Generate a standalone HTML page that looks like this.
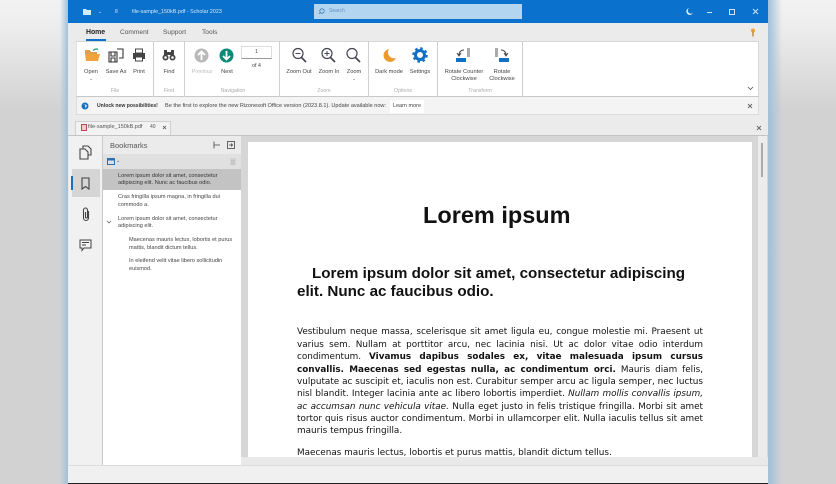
<!DOCTYPE html>
<html><head><meta charset="utf-8"><style>
html,body{margin:0;padding:0}
body{width:836px;height:484px;position:relative;overflow:hidden;background:linear-gradient(#f2f2f2 0,#ececec 30px,#d2d2d2 110px,#d2d2d2 100%);font-family:"Liberation Sans",sans-serif}
#w{position:absolute;left:0;top:0;width:836px;height:484px;filter:blur(.3px)}
div,svg{position:absolute}
.t{white-space:nowrap;color:#444;font-size:5.7px;line-height:7px;text-align:center}
.g{white-space:nowrap;color:#aaa;font-size:5.2px;line-height:7px;text-align:center}
.sep{width:1px;background:#cfcfcf;top:42px;height:55px}
.l{position:absolute;left:297px;width:406px;font-family:"DejaVu Sans",sans-serif;font-size:8.84px;line-height:12px;height:12px;color:#111;text-align:justify;text-align-last:justify}
.b{white-space:nowrap;font-size:5.6px;line-height:7.5px;color:#444}
</style></head><body><div id="w">
<div style="left:60px;top:0;width:8px;height:484px;background:linear-gradient(90deg,rgba(160,195,225,0),#9fc0da)"></div>
<div style="left:768px;top:0;width:14px;height:484px;background:linear-gradient(90deg,#9fc0da,rgba(160,195,225,0))"></div>
<div style="left:68px;top:0;width:700px;height:484px;background:#ebebeb"></div>
<div style="left:68px;top:483px;width:700px;height:1px;background:#222"></div>
<!-- title bar -->
<div style="left:68px;top:0;width:700px;height:23px;background:#0a72cc"></div>
<svg style="left:82px;top:7px" width="10" height="9" viewBox="0 0 10 9"><path d="M1 2h3l1 1h4v5H1z" fill="#d8eafa"/></svg>
<div class="t" style="left:98px;top:9px;color:#cfe3f5;font-size:5px">⌄</div>
<div class="t" style="left:115px;top:9px;color:#cfe3f5;font-size:5px">8</div>
<div class="t" style="left:132px;top:9px;color:#d5e7f7;font-size:5.4px">file-sample_150kB.pdf - Scholar 2023</div>
<div style="left:314px;top:4px;width:208px;height:15px;background:#b3d5f0"></div>
<svg style="left:318px;top:8px" width="7" height="7" viewBox="0 0 7 7"><circle cx="4" cy="3" r="2.2" fill="none" stroke="#3b78b0" stroke-width=".8"/><path d="M2.4 4.6L1 6" stroke="#3b78b0" stroke-width=".8"/></svg>
<div class="t" style="left:329px;top:8px;color:#5d93c4;font-size:5px">Search</div>
<svg style="left:685px;top:7px" width="9" height="9" viewBox="0 0 9 9"><path d="M4 1a3.5 3.5 0 1 0 4 5 3 3 0 0 1-4-5z" fill="#e4f0fa"/></svg>
<div style="left:707px;top:12px;width:5px;height:1px;background:#cfe3f5"></div>
<div style="left:729px;top:9px;width:4px;height:4px;border:1px solid #cfe3f5"></div>
<svg style="left:752px;top:8px" width="7" height="7" viewBox="0 0 7 7"><path d="M1 1l5 5M6 1l-5 5" stroke="#d5e7f7" stroke-width=".9"/></svg>
<!-- tabs -->
<div style="left:86px;top:29px;color:#222;font-size:6.9px;font-weight:bold;line-height:8px">Home</div>
<div style="left:86px;top:39px;width:20px;height:1.5px;background:#0a72cc"></div>
<div style="left:120px;top:29px;color:#555;font-size:6.6px;line-height:8px">Comment</div>
<div style="left:163px;top:29px;color:#555;font-size:6.6px;line-height:8px">Support</div>
<div style="left:202px;top:29px;color:#555;font-size:6.6px;line-height:8px">Tools</div>
<svg style="left:749px;top:28px" width="8" height="9" viewBox="0 0 8 9"><circle cx="4" cy="2.500" r="2" fill="#e8a33a"/><rect x="3.300" y="3.500" width="1.400" height="5" fill="#b8873a"/></svg>
<!-- ribbon -->
<div style="left:76px;top:41px;width:683px;height:56px;background:#fff;border-top:1px solid #d5d5d5;border-bottom:1px solid #c8c8c8;border-right:1px solid #d8d8d8;border-left:1px solid #e0e0e0;box-sizing:border-box"></div>
<div class="sep" style="left:153px"></div><div class="sep" style="left:184px"></div><div class="sep" style="left:279px"></div><div class="sep" style="left:368px"></div><div class="sep" style="left:437px"></div><div class="sep" style="left:522px"></div>
<!-- Open -->
<svg style="left:84px;top:47px" width="17" height="15" viewBox="0 0 17 15"><path d="M1 3h5l1 2h6v2H1z" fill="#d9a050"/><path d="M1 7h15l-2 7H2z" fill="#f3a33c"/><path d="M9 3.500a4 4 0 0 1 5-1" stroke="#159a80" fill="none" stroke-width="1.300"/></svg>
<svg style="left:108px;top:48px" width="16" height="15" viewBox="0 0 16 15" fill="none" stroke="#333" stroke-width="1.100"><path d="M1 4h8v10H1z"/><path d="M3 4v4h4V4M3 14v-4h4v4"/><path d="M9 1h6v9h-4"/></svg>
<svg style="left:132px;top:48px" width="14" height="14" viewBox="0 0 14 14"><path d="M3.500 1h7v4h-7z" fill="none" stroke="#444"/><path d="M1 5h12v6H1z" fill="#444"/><path d="M3.500 9h7v4h-7z" fill="#fff" stroke="#444"/></svg>
<div class="t" style="left:76px;top:69px;width:30px">Open</div><div class="t" style="left:76px;top:75px;width:30px;font-size:4px">⌄</div>
<div class="t" style="left:104px;top:69px;width:24px">Save As</div>
<div class="t" style="left:127px;top:69px;width:24px">Print</div>
<div class="g" style="left:100px;top:88px;width:30px">File</div>
<!-- Find -->
<svg style="left:162px;top:48px" width="14" height="14" viewBox="0 0 14 14"><circle cx="3.500" cy="9.500" r="3" fill="#444"/><circle cx="10.500" cy="9.500" r="3" fill="#444"/><path d="M2 2h3v6H2zM9 2h3v6H9zM5 4h4v3H5z" fill="#444"/><circle cx="3.500" cy="9.500" r="1.300" fill="#fff"/><circle cx="10.500" cy="9.500" r="1.300" fill="#fff"/></svg>
<div class="t" style="left:157px;top:69px;width:24px">Find</div>
<div class="g" style="left:157px;top:88px;width:24px">Find</div>
<!-- Nav -->
<svg style="left:194px;top:48px" width="15" height="15" viewBox="0 0 15 15"><circle cx="7.500" cy="7.500" r="7" fill="#b9b9b9"/><path d="M7.500 12V4M4 7l3.500-3.500L11 7" stroke="#fff" stroke-width="1.800" fill="none"/></svg>
<svg style="left:219px;top:48px" width="15" height="15" viewBox="0 0 15 15"><circle cx="7.500" cy="7.500" r="7" fill="#0d8a78"/><path d="M7.500 3v8M4 8l3.500 3.500L11 8" stroke="#fff" stroke-width="1.800" fill="none"/></svg>
<div class="t" style="left:189px;top:69px;width:26px;color:#bbb;font-size:5.3px">Previous</div>
<div class="t" style="left:214px;top:69px;width:26px">Next</div>
<div style="left:241px;top:46px;width:31px;height:13px;background:#fff;border:1px solid #ddd;border-bottom-color:#999;box-sizing:border-box"></div>
<div class="t" style="left:241px;top:49px;width:31px;font-size:5px">1</div>
<div class="t" style="left:241px;top:63px;width:31px;font-size:5.300px">of 4</div>
<div class="g" style="left:200px;top:88px;width:66px">Navigation</div>
<!-- Zoom -->
<svg style="left:291px;top:47px" width="17" height="16" viewBox="0 0 17 16" fill="none" stroke="#445" stroke-width="1.200"><circle cx="7" cy="6.500" r="5"/><path d="M10.500 10.500L15 15" stroke-width="1.700"/><path d="M4.500 6.500h5" stroke-width="1"/></svg>
<svg style="left:320px;top:47px" width="17" height="16" viewBox="0 0 17 16" fill="none" stroke="#445" stroke-width="1.200"><circle cx="7" cy="6.500" r="5"/><path d="M10.500 10.500L15 15" stroke-width="1.700"/><path d="M4.500 6.500h5M7 4v5" stroke-width="1"/></svg>
<svg style="left:345px;top:47px" width="17" height="16" viewBox="0 0 17 16" fill="none" stroke="#445" stroke-width="1.200"><circle cx="7" cy="6.500" r="5"/><path d="M10.500 10.500L15 15" stroke-width="1.700"/></svg>
<div class="t" style="left:284px;top:69px;width:30px">Zoom Out</div>
<div class="t" style="left:314px;top:69px;width:30px">Zoom In</div>
<div class="t" style="left:339px;top:69px;width:30px">Zoom</div><div class="t" style="left:339px;top:75px;width:30px;font-size:4px">⌄</div>
<div class="g" style="left:309px;top:88px;width:30px">Zoom</div>
<!-- Options -->
<svg style="left:382px;top:48px" width="15" height="15" viewBox="0 0 15 15"><path d="M7 1a6.500 6.500 0 1 0 7 9 6 6 0 0 1-7-9z" fill="#ee9a2e"/></svg>
<svg style="left:412px;top:47px" width="16" height="16" viewBox="0 0 16 16"><circle cx="8" cy="8" r="4.500" fill="none" stroke="#1170c4" stroke-width="3"/><circle cx="8" cy="8" r="6.500" fill="none" stroke="#1170c4" stroke-width="2.500" stroke-dasharray="2.500 2.600"/></svg>
<div class="t" style="left:374px;top:69px;width:30px">Dark mode</div>
<div class="t" style="left:405px;top:69px;width:30px">Settings</div>
<div class="g" style="left:388px;top:88px;width:30px">Options</div>
<!-- Transform -->
<svg style="left:455px;top:47px" width="17" height="16" viewBox="0 0 17 16"><rect x="12" y="1" width="3" height="9" fill="#aaa"/><rect x="1" y="11" width="10" height="4" fill="#1170c4"/><path d="M9 3C6 3 4 5 4 8M2 6l2 3 2-3" fill="none" stroke="#444" stroke-width="1"/></svg>
<svg style="left:493px;top:47px" width="17" height="16" viewBox="0 0 17 16"><rect x="2" y="1" width="3" height="9" fill="#aaa"/><rect x="6" y="11" width="10" height="4" fill="#1170c4"/><path d="M8 3c3 0 5 2 5 5M11 6l2 3 2-3" fill="none" stroke="#444" stroke-width="1"/></svg>
<div class="t" style="left:440px;top:69px;width:48px">Rotate Counter</div><div class="t" style="left:440px;top:75.500px;width:48px">Clockwise</div>
<div class="t" style="left:482px;top:69px;width:40px">Rotate</div><div class="t" style="left:482px;top:75.500px;width:40px">Clockwise</div>
<div class="g" style="left:465px;top:88px;width:30px">Transform</div>
<svg style="left:747px;top:86px" width="7" height="5" viewBox="0 0 7 5"><path d="M1 1l2.500 2.500L6 1" fill="none" stroke="#555" stroke-width=".8"/></svg>
<!-- notice -->
<div style="left:76px;top:97px;width:683px;height:18px;background:#f4f4f4;border:1px solid #dcdcdc;border-top:none;box-sizing:border-box"></div>
<svg style="left:81px;top:102px" width="8" height="8" viewBox="0 0 8 8"><circle cx="4" cy="4" r="3.500" fill="#1272c4"/><path d="M2 2l2 1v2l1 1 1-3" fill="#cfe6f7"/></svg>
<div class="t" style="left:97px;top:103px;font-weight:bold;color:#333;font-size:5.1px">Unlock new possibilities!</div>
<div class="t" style="left:165px;top:103px;font-size:5.55px;color:#444">Be the first to explore the new Rizonesoft Office version (2023.8.1). Update available now:</div>
<div style="left:390px;top:100px;width:34px;height:13px;background:#fff"></div>
<div class="t" style="left:390px;top:103px;width:34px;font-size:5.5px">Learn more</div>
<svg style="left:747px;top:103px" width="6" height="6" viewBox="0 0 6 6"><path d="M1 1l4 4M5 1L1 5" stroke="#666" stroke-width=".9"/></svg>
<!-- doc tab -->
<div style="left:75px;top:121px;width:96px;height:15px;background:#f2f2f2;border:1px solid #d0d0d0;border-bottom:none;box-sizing:border-box"></div>
<svg style="left:81px;top:124px" width="6" height="7" viewBox="0 0 6 7"><rect x=".5" y=".5" width="5" height="6" fill="#f2c9c9" stroke="#b84a55"/></svg>
<div class="t" style="left:88px;top:124px;font-size:5.500px;color:#555">file-sample_150kB.pdf</div>
<div class="t" style="left:150px;top:124px;font-size:5px;color:#555">40</div>
<svg style="left:162px;top:125px" width="5" height="5" viewBox="0 0 5 5"><path d="M1 1l3 3M4 1L1 4" stroke="#555" stroke-width=".8"/></svg>
<svg style="left:756px;top:125px" width="6" height="6" viewBox="0 0 6 6"><path d="M1 1l4 4M5 1L1 5" stroke="#666" stroke-width=".9"/></svg>
<div style="left:68px;top:135px;width:700px;height:1px;background:#c4c4c4"></div>
<!-- left rail -->
<div style="left:69px;top:136px;width:33px;height:329px;background:#f1f1f1"></div>
<div style="left:102px;top:136px;width:1px;height:329px;background:#c9c9c9"></div>
<div style="left:72px;top:169px;width:28px;height:28px;background:#d5d5d5"></div>
<div style="left:71px;top:176px;width:1.500px;height:14px;background:#1272c4"></div>
<svg style="left:79px;top:145px" width="13" height="15" viewBox="0 0 13 15" fill="none" stroke="#444" stroke-width="1.100"><path d="M4 4V1h5l3 3v6H9"/><path d="M1 4h5l3 3v7H1z"/></svg>
<svg style="left:81px;top:177px" width="9" height="13" viewBox="0 0 9 13" fill="none" stroke="#444" stroke-width="1.100"><path d="M1 1h7v11L4.500 9.500 1 12z"/></svg>
<svg style="left:81px;top:207px" width="10" height="15" viewBox="0 0 10 15" fill="none" stroke="#444" stroke-width="1.100"><path d="M7.500 4v7a2.500 2.500 0 0 1-5 0V3a2 2 0 0 1 4 0v7a.8.8 0 0 1-2 0V5"/></svg>
<svg style="left:79px;top:239px" width="13" height="13" viewBox="0 0 13 13" fill="none" stroke="#444" stroke-width="1"><path d="M1 1h11v8H5l-2 2.500V9H1z"/><path d="M3 3.500h7M3 6h4"/></svg>
<!-- bookmarks panel -->
<div style="left:103px;top:136px;width:138px;height:329px;background:#fff"></div>
<div style="left:103px;top:136px;width:138px;height:18px;background:#ebebeb"></div>
<div style="left:110px;top:141px;font-size:7.500px;line-height:9px;color:#555">Bookmarks</div>
<svg style="left:213px;top:141px" width="8" height="8" viewBox="0 0 8 8" fill="none" stroke="#444" stroke-width=".8"><path d="M1 .5v7M1 4h6"/></svg>
<svg style="left:227px;top:141px" width="8" height="8" viewBox="0 0 8 8" fill="none" stroke="#444" stroke-width=".8"><rect x=".5" y=".5" width="7" height="7"/><path d="M2 4h4M4 2.500L5.500 4 4 5.500"/></svg>
<div style="left:103px;top:154px;width:138px;height:15px;background:#e0e0e0"></div>
<svg style="left:107px;top:158px" width="8" height="7" viewBox="0 0 8 7"><rect width="8" height="7" fill="#2f6fae"/><rect x="1" y="2.500" width="6" height="3.500" fill="#d5e3f0"/></svg>
<div class="t" style="left:116px;top:158px;font-size:5px;color:#555">⌄</div>
<svg style="left:230px;top:158px" width="6" height="7" viewBox="0 0 6 7"><path d="M0 1h6M1 2h4v5H1z" fill="#c9c9c9" stroke="#bbb" stroke-width=".5"/></svg>
<div style="left:103px;top:169px;width:138px;height:21px;background:#c3c3c3"></div>
<div class="b" style="left:118px;top:172.500px;color:#333">Lorem ipsum dolor sit amet, consectetur<br>adipiscing elit. Nunc ac faucibus odio.</div>
<div class="b" style="left:118px;top:194px">Cras fringilla ipsum magna, in fringilla dui<br>commodo a.</div>
<svg style="left:106px;top:220px" width="6" height="4" viewBox="0 0 6 4"><path d="M1 1l2 2 2-2" fill="none" stroke="#555" stroke-width=".7"/></svg>
<div class="b" style="left:118px;top:215.500px">Lorem ipsum dolor sit amet, consectetur<br>adipiscing elit.</div>
<div class="b" style="left:129px;top:237px">Maecenas mauris lectus, lobortis et purus<br>mattis, blandit dictum tellus.</div>
<div class="b" style="left:129px;top:258px">In eleifend velit vitae libero sollicitudin<br>euismod.</div>
<!-- viewer -->
<div style="left:241px;top:136px;width:527px;height:329px;background:#d6d6d6"></div>
<div style="left:758px;top:136px;width:9px;height:322px;background:#ececec"></div>
<div style="left:761px;top:143px;width:2px;height:34px;background:#aaa"></div>
<div style="left:241px;top:457px;width:527px;height:8px;background:#e9e9e9"></div>
<div style="left:248px;top:142px;width:504px;height:315px;background:#fff"></div>
<div style="left:423px;top:201px;font-size:23.500px;line-height:28px;font-weight:bold;color:#111;white-space:nowrap">Lorem ipsum</div>
<div style="left:312px;top:265px;font-size:15.200px;line-height:18px;font-weight:bold;color:#111;white-space:nowrap">Lorem ipsum dolor sit amet, consectetur adipiscing</div>
<div style="left:297px;top:283px;font-size:15.200px;line-height:18px;font-weight:bold;color:#111;white-space:nowrap">elit. Nunc ac faucibus odio.</div>
<div class="l" style="top:326px">Vestibulum neque massa, scelerisque sit amet ligula eu, congue molestie mi. Praesent ut</div>
<div class="l" style="top:338.500px">varius sem. Nullam at porttitor arcu, nec lacinia nisi. Ut ac dolor vitae odio interdum</div>
<div class="l" style="top:350.500px">condimentum. <b>Vivamus dapibus sodales ex, vitae malesuada ipsum cursus</b></div>
<div class="l" style="top:363.500px"><b>convallis. Maecenas sed egestas nulla, ac condimentum orci.</b> Mauris diam felis,</div>
<div class="l" style="top:375.500px">vulputate ac suscipit et, iaculis non est. Curabitur semper arcu ac ligula semper, nec luctus</div>
<div class="l" style="top:388px">nisl blandit. Integer lacinia ante ac libero lobortis imperdiet. <i>Nullam mollis convallis ipsum,</i></div>
<div class="l" style="top:400.500px"><i>ac accumsan nunc vehicula vitae.</i> Nulla eget justo in felis tristique fringilla. Morbi sit amet</div>
<div class="l" style="top:413px">tortor quis risus auctor condimentum. Morbi in ullamcorper elit. Nulla iaculis tellus sit amet</div>
<div class="l" style="top:425px;text-align-last:left">mauris tempus fringilla.</div>
<div class="l" style="top:447px;text-align-last:left;height:11px;overflow:hidden">Maecenas mauris lectus, lobortis et purus mattis, blandit dictum tellus.</div>
<!-- status -->
<div style="left:68px;top:465px;width:700px;height:18px;background:#f0f0f0;border-top:1px solid #dcdcdc;box-sizing:border-box"></div>
</div></body></html>
